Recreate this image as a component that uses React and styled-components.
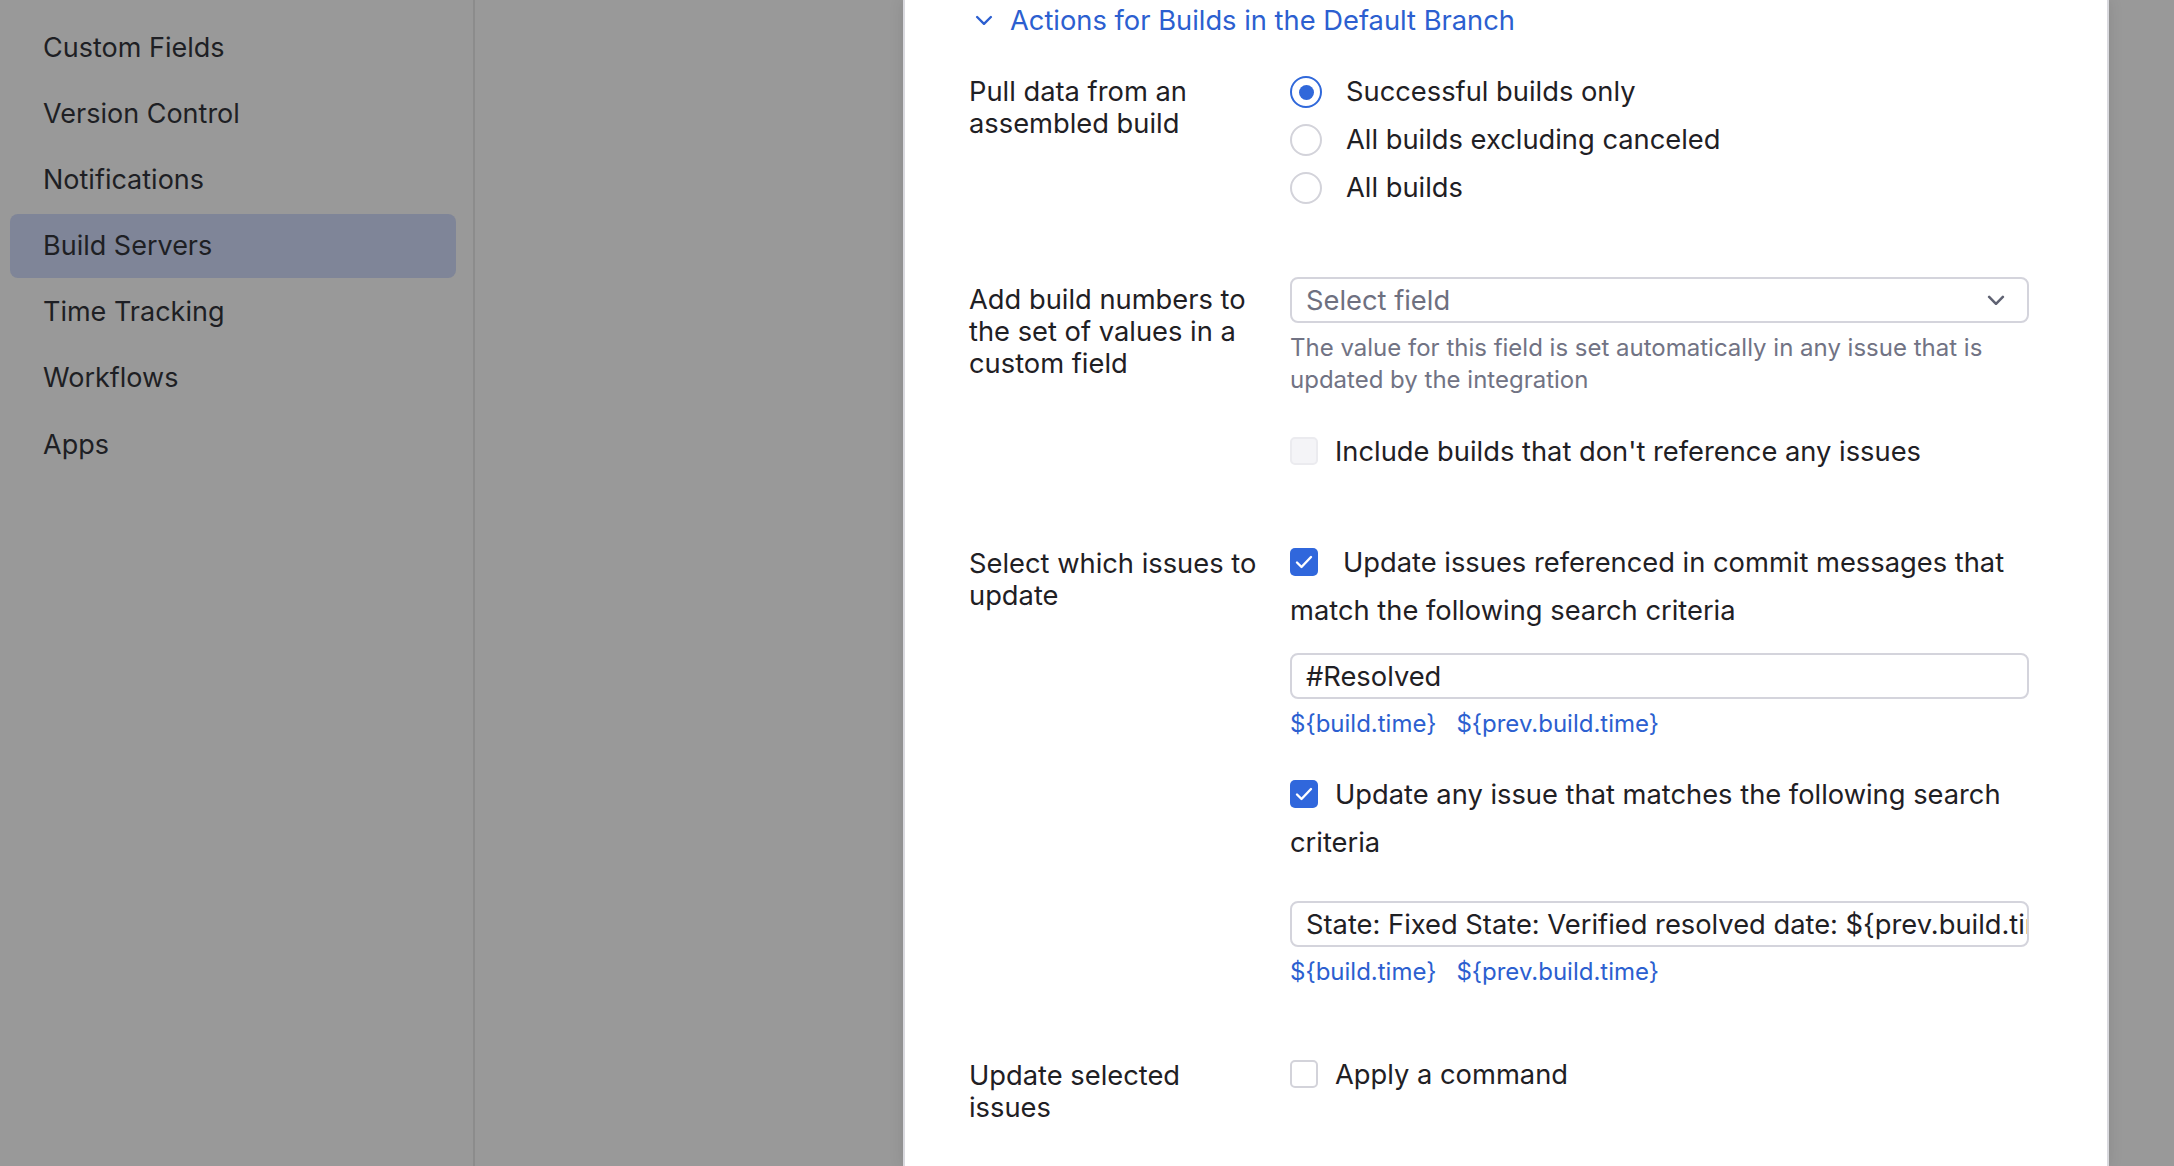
import React from "react";
import styled, { createGlobalStyle } from "styled-components";

const Global = createGlobalStyle`
  html, body { margin: 0; padding: 0; }
  body { font-family: Inter, "Noto Sans", "Liberation Sans", sans-serif; -webkit-font-smoothing: antialiased; }
  * { box-sizing: border-box; }
`;

const Page = styled.div`
  display: flex;
  height: 1166px;
  overflow: hidden;
  background: #999999;
`;

const Sidebar = styled.nav`
  flex: 0 0 475px;
  border-right: 2px solid #8c8c8c;
  padding-top: 15px;
  display: flex;
  flex-direction: column;
  gap: 2.2px;
`;

const NavItem = styled.div`
  height: 64px;
  margin: 0 17px 0 10px;
  padding-left: 33px;
  display: flex;
  align-items: center;
  border-radius: 8px;
  font-size: 27px;
  color: #1e1f24;
  background: ${(p) => (p.$active ? "#7f8598" : "transparent")};
`;

const Backdrop = styled.div`
  flex: 1;
  min-width: 0;
  display: flex;
  padding-left: 428px;
`;

const Panel = styled.section`
  flex: 0 0 1206px;
  width: 1206px;
  min-width: 0;
  height: 100%;
  background: #ffffff;
  border-left: 2px solid #d9d9de;
  border-right: 2px solid #d9d9de;
  box-shadow: 0 0 14px rgba(0, 0, 0, 0.1);
  padding: 0 78px 0 64px;
  color: #1f2024;
`;

const Heading = styled.div`
  height: 40px;
  display: flex;
  align-items: center;
  gap: 17px;
  padding-left: 6px;
  font-size: 27.3px;
  color: #2c5fd0;
`;

const Row = styled.div`
  display: flex;
  margin-top: ${(p) => p.$mt}px;
`;

const Label = styled.div`
  flex: 0 0 321px;
  padding-top: ${(p) => p.$pt || 0}px;
  font-size: 27.3px;
  line-height: 32px;
`;

const Control = styled.div`
  flex: 1;
  min-width: 0;
  display: flex;
  flex-direction: column;
`;

const RadioList = styled.div`
  display: flex;
  flex-direction: column;
  gap: 16px;
`;

const RadioOption = styled.label`
  display: flex;
  align-items: center;
  gap: 24px;
  font-size: 27.3px;
  line-height: 32px;
`;

const RadioCircle = styled.span`
  width: 32px;
  height: 32px;
  border-radius: 50%;
  border: ${(p) => (p.$checked ? "2.5px solid #3068da" : "2px solid #d3d3da")};
  display: flex;
  align-items: center;
  justify-content: center;
  &::after {
    content: "";
    width: 15px;
    height: 15px;
    border-radius: 50%;
    background: ${(p) => (p.$checked ? "#3068da" : "transparent")};
  }
`;

const Select = styled.div`
  height: 46px;
  border: 2px solid #d4d4dc;
  border-radius: 8px;
  display: flex;
  align-items: center;
  justify-content: space-between;
  padding: 0 22px 0 14px;
  font-size: 27.3px;
  color: #6e7080;
`;

const Help = styled.div`
  margin-top: 9px;
  font-size: 24px;
  line-height: 32px;
  color: #717384;
`;

const CheckLine = styled.div`
  margin-top: ${(p) => p.$mt || 0}px;
  font-size: 27.3px;
  line-height: ${(p) => p.$lh || 32}px;
`;

const Box = styled.span`
  display: inline-flex;
  align-items: center;
  justify-content: center;
  vertical-align: middle;
  position: relative;
  top: -3px;
  width: 28px;
  height: 28px;
  margin-right: ${(p) => p.$gap || 17}px;
  border-radius: 5px;
  background: ${(p) => (p.$checked ? "#3067dc" : p.$disabled ? "#f4f4f7" : "#ffffff")};
  border: ${(p) => (p.$checked ? "none" : p.$disabled ? "2px solid #ebebef" : "2px solid #d3d3da")};
`;

const Input = styled.div`
  margin-top: ${(p) => p.$mt}px;
  height: 46px;
  border: 2px solid #d4d4dc;
  border-radius: 8px;
  display: flex;
  align-items: center;
  padding: 0 14px;
  font-size: 27.3px;
  color: #1f2024;
  white-space: nowrap;
  overflow: hidden;
`;

const Links = styled.div`
  margin-top: 9px;
  display: flex;
  gap: 20px;
  font-size: 24px;
  line-height: 32px;
  color: #2c5fd0;
`;

const Chevron = ({ color, size = 18, sw = 2.5 }) => (
  <svg width={size} height={size * 0.6} viewBox="0 0 18 11" fill="none">
    <path d="M2 2l7 7 7-7" stroke={color} strokeWidth={sw} strokeLinecap="round" strokeLinejoin="round" />
  </svg>
);

const Tick = () => (
  <svg width="18" height="14" viewBox="0 0 18 14" fill="none">
    <path d="M2 7.5l4.5 4.5L16 2" stroke="#fff" strokeWidth="2.4" strokeLinecap="round" strokeLinejoin="round" />
  </svg>
);

const nav = ["Custom Fields", "Version Control", "Notifications", "Build Servers", "Time Tracking", "Workflows", "Apps"];

export default function App() {
  return (
    <>
      <Global />
      <Page>
        <Sidebar>
          {nav.map((n) => (
            <NavItem key={n} $active={n === "Build Servers"}>{n}</NavItem>
          ))}
        </Sidebar>
        <Backdrop>
          <Panel>
            <Heading>
              <Chevron color="#2c5fd0" size={18} sw={2.4} />
              <span>Actions for Builds in the Default Branch</span>
            </Heading>

            <Row $mt={36}>
              <Label>Pull data from an<br />assembled build</Label>
              <Control>
                <RadioList>
                  <RadioOption><RadioCircle $checked />Successful builds only</RadioOption>
                  <RadioOption><RadioCircle />All builds excluding canceled</RadioOption>
                  <RadioOption><RadioCircle />All builds</RadioOption>
                </RadioList>
              </Control>
            </Row>

            <Row $mt={73}>
              <Label $pt={7}>Add build numbers to<br />the set of values in a<br />custom field</Label>
              <Control>
                <Select>
                  <span>Select field</span>
                  <Chevron color="#5f6272" size={18} sw={2.6} />
                </Select>
                <Help>The value for this field is set automatically in any issue that is<br />updated by the integration</Help>
                <CheckLine $mt={40}><Box $disabled />Include builds that don't reference any issues</CheckLine>
              </Control>
            </Row>

            <Row $mt={71}>
              <Label $pt={9}>Select which issues to<br />update</Label>
              <Control>
                <CheckLine $lh={48}><Box $checked $gap={25}><Tick /></Box>Update issues referenced in commit messages that<br />match the following search criteria</CheckLine>
                <Input $mt={18}>#Resolved</Input>
                <Links><span>{"${build.time}"}</span><span>{"${prev.build.time}"}</span></Links>
                <CheckLine $lh={48} $mt={31}><Box $checked><Tick /></Box>Update any issue that matches the following search<br />criteria</CheckLine>
                <Input $mt={34}>{"State: Fixed State: Verified resolved date: ${prev.build.time}"}</Input>
                <Links><span>{"${build.time}"}</span><span>{"${prev.build.time}"}</span></Links>
              </Control>
            </Row>

            <Row $mt={71}>
              <Label $pt={1}>Update selected<br />issues</Label>
              <Control>
                <CheckLine><Box />Apply a command</CheckLine>
              </Control>
            </Row>
          </Panel>
        </Backdrop>
      </Page>
    </>
  );
}
